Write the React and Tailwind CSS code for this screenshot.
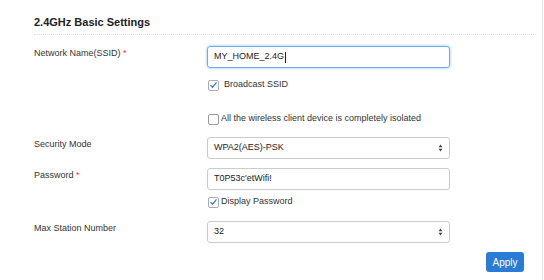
import React, { useState } from 'react';

const Check = ({ checked, onChange }) => (
  <span
    onClick={onChange}
    className={`flex h-[11px] w-[11px] shrink-0 items-center justify-center rounded-[2px] border bg-white ${
      checked ? 'border-[#aab]' : 'border-[#999]'
    }`}
  >
    {checked && (
      <svg viewBox="0 0 12 12" className="h-[10px] w-[10px]">
        <path d="M2 6.2 L4.8 9 L10 2.6" fill="none" stroke="#2f7de1" strokeWidth="1.6" />
      </svg>
    )}
  </span>
);

const Arrows = () => (
  <svg viewBox="0 0 6 10" className="h-[8px] w-[5px]">
    <path d="M3 0.5 L5.5 4 H0.5 Z M3 9.5 L5.5 6 H0.5 Z" fill="#444" />
  </svg>
);

const Row = ({ label, required, children, className = '' }) => (
  <div className={`flex ${className}`}>
    <div className="w-[173px] shrink-0 pt-[1px] text-[9px] leading-[12px] text-[#333]">
      {label}
      {required && <span className="text-[#e33]"> *</span>}
    </div>
    <div className="w-[243px]">{children}</div>
  </div>
);

const App = () => {
  const [broadcast, setBroadcast] = useState(true);
  const [isolated, setIsolated] = useState(false);
  const [showPass, setShowPass] = useState(true);

  return (
    <div
      className="h-[280px] w-[543px] overflow-hidden border-r border-[#e6e6e6] bg-white pl-[34px] pr-[6px]"
      style={{ fontFamily: '"Liberation Sans", Arial, sans-serif' }}
    >
      <h2 className="pt-[15px] pb-[5px] text-[11px] leading-[14px] font-bold text-[#222]">2.4GHz Basic Settings</h2>
      <div className="border-b border-dotted border-[#e2e2e2]" />

      <Row label="Network Name(SSID)" required className="mt-[11px]">
        <div className="flex h-[22px] items-center rounded-[3px] border border-[#66afe9] px-[6px] text-[9px] text-[#222] shadow-[0_0_3px_rgba(102,175,233,0.8)]">
          MY_HOME_2.4G<span className="ml-[1px] h-[11px] w-px bg-[#222]" />
        </div>
        <label className="mt-[11px] flex h-[12px] items-center gap-[5px] pl-[1px] text-[9px] text-[#333]">
          <Check checked={broadcast} onChange={() => setBroadcast(!broadcast)} />
          Broadcast SSID
        </label>
        <label className="mt-[22px] flex h-[12px] items-center gap-[2px] pl-[1px] text-[9px] text-[#333]">
          <Check checked={isolated} onChange={() => setIsolated(!isolated)} />
          All the wireless client device is completely isolated
        </label>
      </Row>

      <Row label="Security Mode" className="mt-[12px]">
        <div className="flex h-[22px] items-center justify-between rounded-[3px] border border-[#ccc] px-[6px] text-[9px] text-[#222]">
          WPA2(AES)-PSK
          <Arrows />
        </div>
      </Row>

      <Row label="Password" required className="mt-[9px]">
        <div className="flex h-[22px] items-center rounded-[3px] border border-[#ccc] px-[6px] text-[9px] text-[#222]">
          T0P53c'etWifi!
        </div>
        <label className="mt-[6px] flex h-[12px] items-center gap-[2px] pl-[1px] text-[9px] text-[#333]">
          <Check checked={showPass} onChange={() => setShowPass(!showPass)} />
          Display Password
        </label>
      </Row>

      <Row label="Max Station Number" className="mt-[13px]">
        <div className="flex h-[22px] items-center justify-between rounded-[3px] border border-[#ccc] px-[6px] text-[9px] text-[#222]">
          32
          <Arrows />
        </div>
      </Row>

      <div className="mt-[9px] flex justify-end pr-[12px]">
        <button className="h-[20px] w-[38px] rounded-[3px] bg-[#2a7bd6] text-[10px] font-medium text-white">Apply</button>
      </div>
    </div>
  );
};

export default App;
